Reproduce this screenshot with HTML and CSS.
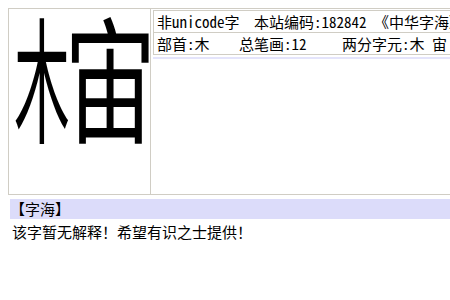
FILE: index.html
```html
<!DOCTYPE html>
<html lang="zh">
<head>
  <meta charset="UTF-8" />
  <title>字海</title>
  <link rel="stylesheet" href="styles.css">
</head>
<body>

  <!-- 字头 -->
  <div class="entry">
    <div class="glyph">
      <div class="glyph-pic">
        <div class="part part-left"><span>木</span></div>
        <div class="part part-right"><span>宙</span></div>
      </div>
    </div>
    <div class="info">
      <div class="row">
        <span>非unicode字</span>
        <span class="gap-a">本站编码:182842</span>
        <span class="gap-b">《中华字海》</span>
      </div>
      <div class="row">
        <span>部首:木</span>
        <span class="gap-c">总笔画:12</span>
        <span class="gap-d">两分字元:木 宙</span>
      </div>
      <div class="info-line"></div>
    </div>
  </div>

  <!-- 释义 -->
  <div class="section-title">【字海】</div>
  <p class="desc">该字暂无解释！希望有识之士提供！</p>

</body>
</html>
```

FILE: styles.css
```css
body {
  margin: 0;
  padding: 8px 0 0 8px;
  overflow: hidden;
  font-family: "Noto Sans Mono CJK SC", "Noto Sans CJK SC", sans-serif;
  font-size: 15px;
  color: #000;
  background: #fff;
}

/* 字头 */
.entry {
  display: flex;
  width: 600px;
  height: 185px;
  border: 1px solid #d0cdc4;
}

.glyph {
  width: 141px;
  border-right: 1px solid #d0cdc4;
  display: flex;
  justify-content: center;
}

.glyph-pic {
  display: flex;
  width: 132px;
  height: 137px;
  margin-top: -4px;
}

.part {
  height: 137px;
  overflow: visible;
}
.part span {
  display: block;
  font-size: 136px;
  line-height: 137px;
  transform-origin: 0 0;
}
.part-left { width: 50px; }
.part-left span { transform: scaleX(0.41); }
.part-right { width: 82px; }
.part-right span { transform: scaleX(0.68); }

.info {
  flex: 1;
  padding: 1px 2px;
}

.row {
  border: 1px solid #d0cdc4;
  height: 21px;
  line-height: 21px;
  padding-left: 3px;
  white-space: nowrap;
}
.row + .row {
  border-top: none;
}

.gap-a { margin-left: 7px; }
.gap-b { margin-left: 0; }
.gap-c { margin-left: 22px; }
.gap-d { margin-left: 28px; }

.info-line {
  margin-top: 2px;
  border-top: 2px solid #e4e4fb;
}

/* 释义 */
.section-title {
  margin: 4px 0 0 2px;
  background: #dcdcfa;
  height: 20px;
  line-height: 20px;
}

.desc {
  margin: 3px 0 0 4px;
  line-height: 20px;
}
```
